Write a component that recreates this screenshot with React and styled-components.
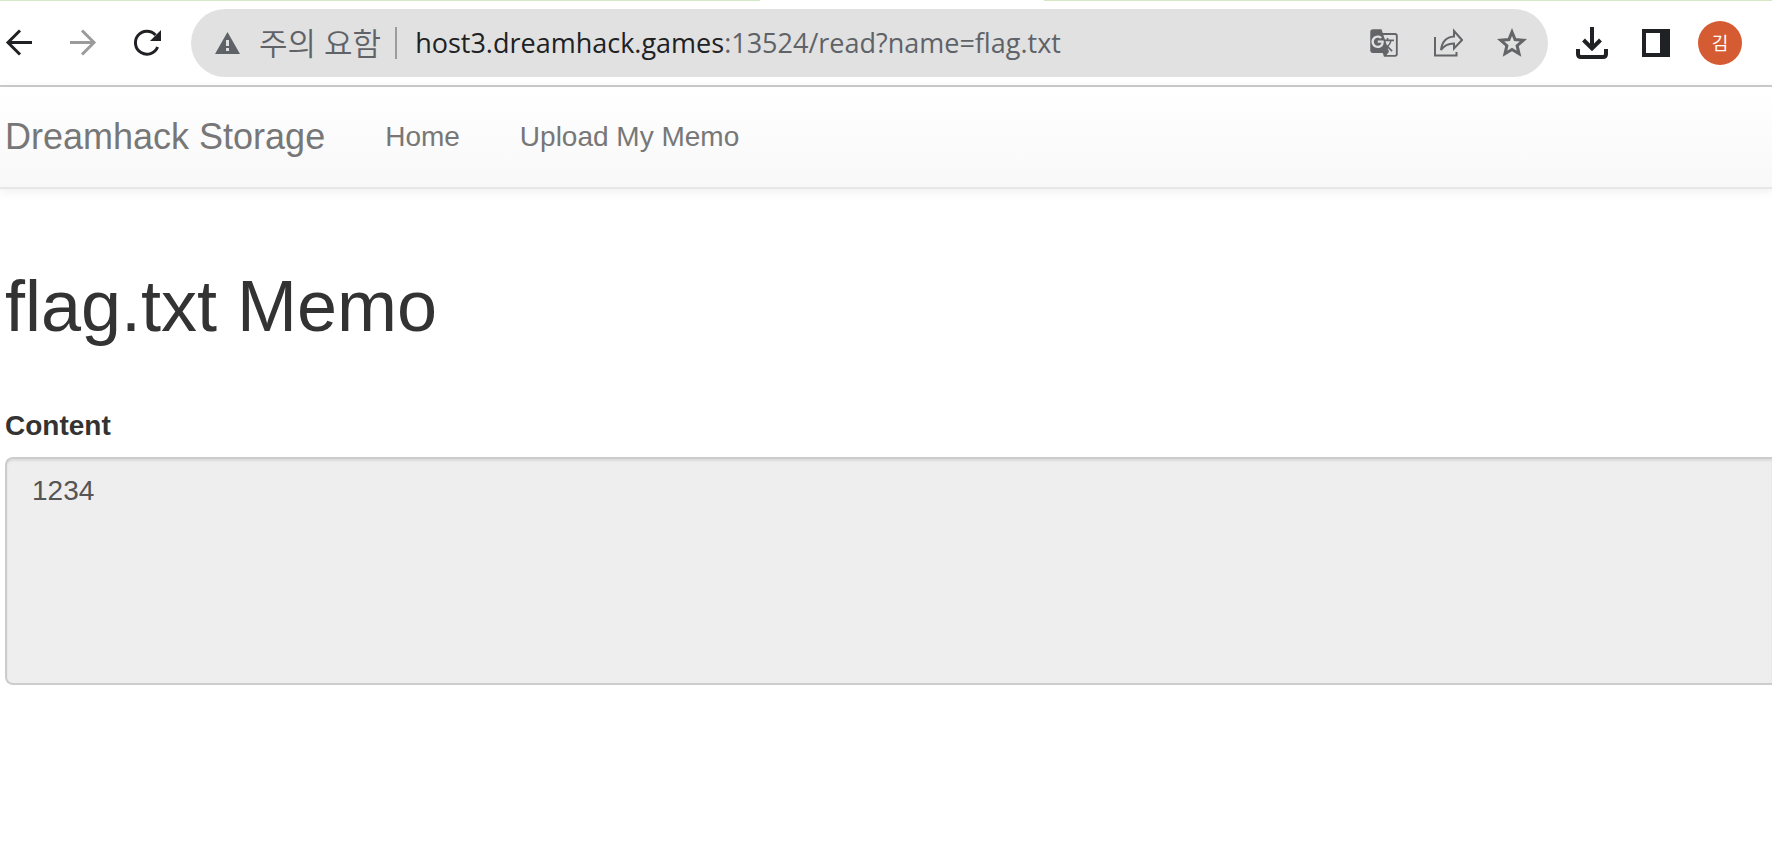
import React from "react";
import styled, { createGlobalStyle } from "styled-components";
import { MdGTranslate } from "react-icons/md";

const GlobalStyle = createGlobalStyle`
  * {
    box-sizing: border-box;
  }

  body {
    margin: 0;
    background-color: #fff;
    color: #333;
    font-family: "Liberation Sans", Arial, sans-serif;
    font-size: 28px;
    line-height: 40px;
    overflow-x: hidden;
  }
`;

const TabStrip = styled.div`
  display: flex;
  height: 1px;
`;

const StripPart = styled.div`
  flex: ${({ $grow }) => $grow};
  background-color: ${({ $active }) => ($active ? "#fff" : "#d3e8c3")};
`;

const Toolbar = styled.div`
  display: flex;
  align-items: center;
  gap: 28px;
  padding: 8px 30px 8px 5px;
  border-bottom: 2px solid #cbcdcb;
`;

const NavButtons = styled.div`
  display: flex;
  gap: 36px;
`;

const IconButton = styled.button`
  display: flex;
  padding: 0;
  border: none;
  background: none;
  color: ${({ $color }) => $color || "#202124"};
  cursor: pointer;
`;

const AddressBar = styled.div`
  flex: 1;
  display: flex;
  align-items: center;
  height: 68px;
  margin-left: 2px;
  padding: 0 21px 0 24px;
  border-radius: 34px;
  background-color: #e1e1e1;
`;

const SecurityButton = styled.button`
  display: flex;
  align-items: center;
  gap: 19px;
  padding: 0;
  border: none;
  background: none;
  color: #5f6368;
  font-family: "Open Sans", "Noto Sans CJK KR", sans-serif;
  font-weight: 350;
  font-size: 31px;
  line-height: 40px;
  white-space: nowrap;
  cursor: pointer;
`;

const Divider = styled.span`
  width: 2px;
  height: 32px;
  margin: 0 18px 0 14px;
  background-color: #9c9c9c;
`;

const Url = styled.div`
  flex: 1;
  color: #5f6368;
  font-family: "Open Sans", "Noto Sans", sans-serif;
  font-size: 27px;
  white-space: nowrap;
  outline: none;
`;

const Host = styled.span`
  color: #202124;
`;

const BarActions = styled.div`
  display: flex;
  gap: 34px;
`;

const Avatar = styled.button`
  width: 44px;
  height: 44px;
  padding: 0;
  border: none;
  border-radius: 50%;
  background-color: #d55c32;
  color: #fff;
  font-family: "Open Sans", "Noto Sans CJK KR", sans-serif;
  font-size: 18px;
  line-height: 44px;
  cursor: pointer;
`;

const Navbar = styled.nav`
  display: flex;
  gap: 60px;
  padding: 30px 5px;
  border-bottom: 2px solid #e7e7e7;
  background-image: linear-gradient(to bottom, #fff, #f8f8f8);
  box-shadow: 0 2px 10px rgba(0, 0, 0, 0.075);
`;

const NavLink = styled.a`
  color: #777;
  font-size: ${({ $brand }) => ($brand ? "36px" : "28px")};
  text-decoration: none;
  white-space: nowrap;
`;

const Main = styled.main`
  padding: 77px 0 0 5px;
`;

const Title = styled.h1`
  margin: 0 0 60px;
  font-size: 72px;
  font-weight: 400;
  line-height: 80px;
`;

const Label = styled.label`
  display: block;
  margin-bottom: 11px;
  font-weight: 700;
`;

const TextArea = styled.textarea`
  display: block;
  width: 100%;
  height: 228px;
  padding: 12px 25px;
  border: 2px solid #ccc;
  border-right: none;
  border-radius: 8px 0 0 8px;
  background-color: #eee;
  box-shadow: inset 0 2px 2px rgba(0, 0, 0, 0.075);
  color: #555;
  font: inherit;
  resize: none;
  outline: none;
`;

const BackIcon = () => (
  <svg width="28" height="28" fill="none" stroke="currentColor" strokeWidth="3">
    <path d="M27 13.5H3M15 1.5l-12 12 12 12" />
  </svg>
);

const ForwardIcon = () => (
  <svg width="28" height="28" fill="none" stroke="currentColor" strokeWidth="3">
    <path d="M1 13.5h24M13 1.5l12 12-12 12" />
  </svg>
);

const ReloadIcon = () => (
  <svg width="28" height="28">
    <path
      d="M24.6 18A11.5 11.5 0 1 1 22.5 6"
      fill="none"
      stroke="currentColor"
      strokeWidth="3"
    />
    <path d="M28 1v11H17z" fill="currentColor" />
  </svg>
);

const WarningIcon = () => (
  <svg width="25" height="22">
    <path
      d="M12.5 0L25 22H0zM11 8v6h3V8zM11 16v3h3v-3z"
      fill="currentColor"
      fillRule="evenodd"
    />
  </svg>
);

const ShareIcon = () => (
  <svg width="30" height="30" fill="none" stroke="currentColor" strokeWidth="2">
    <path d="M2 9v18.5h21.5V24" />
    <path d="M21 3l8 9-8 8.5v-5c-6 0-10 2-13 6.500 1-8 5-13 13-13.500z" />
  </svg>
);

const StarIcon = () => (
  <svg width="30" height="30" fill="none" stroke="currentColor" strokeWidth="3">
    <path d="M15 4l3.1 7.6 8.2.7-6.200 5.400 1.900 8-7-4.300-7 4.300 1.900-8-6.200-5.400 8.200-.7z" />
  </svg>
);

const DownloadIcon = () => (
  <svg width="32" height="32" fill="none" stroke="currentColor" strokeWidth="4">
    <path d="M16 0v21M7.5 13l8.5 8.5 8.5-8.5" />
    <path d="M2 22v5q0 3 3 3h22q3 0 3-3v-5" />
  </svg>
);

const PanelIcon = () => (
  <svg width="34" height="28" viewBox="-6 0 34 28">
    <path d="M0 0h28v28H0zM4 4v20h14V4z" fill="currentColor" fillRule="evenodd" />
  </svg>
);

const Browser = () => {
  return (
    <header>
      <TabStrip>
        <StripPart $grow={760} />
        <StripPart $grow={284} $active />
        <StripPart $grow={728} />
      </TabStrip>
      <Toolbar>
        <NavButtons>
          <IconButton aria-label="뒤로">
            <BackIcon />
          </IconButton>
          <IconButton aria-label="앞으로" $color="#9b9b9b">
            <ForwardIcon />
          </IconButton>
          <IconButton aria-label="새로고침">
            <ReloadIcon />
          </IconButton>
        </NavButtons>
        <AddressBar>
          <SecurityButton>
            <WarningIcon />
            주의 요함
          </SecurityButton>
          <Divider />
          <Url
            role="textbox"
            aria-label="주소"
            contentEditable
            suppressContentEditableWarning
            spellCheck={false}
          >
            <Host>host3.dreamhack.games</Host>:13524/read?name=flag.txt
          </Url>
          <BarActions>
            <IconButton aria-label="번역" $color="#636568">
              <MdGTranslate size={30} />
            </IconButton>
            <IconButton aria-label="공유" $color="#636568">
              <ShareIcon />
            </IconButton>
            <IconButton aria-label="북마크" $color="#636568">
              <StarIcon />
            </IconButton>
          </BarActions>
        </AddressBar>
        <IconButton aria-label="다운로드">
          <DownloadIcon />
        </IconButton>
        <IconButton aria-label="사이드 패널">
          <PanelIcon />
        </IconButton>
        <Avatar>김</Avatar>
      </Toolbar>
    </header>
  );
};

const App = () => {
  return (
    <>
      <GlobalStyle />
      <Browser />
      <Navbar>
        <NavLink href="#" $brand>
          Dreamhack Storage
        </NavLink>
        <NavLink href="#">Home</NavLink>
        <NavLink href="#">Upload My Memo</NavLink>
      </Navbar>
      <Main>
        <Title>flag.txt Memo</Title>
        <Label htmlFor="content">Content</Label>
        <TextArea id="content" name="content" readOnly value="1234" />
      </Main>
    </>
  );
};

export default App;
